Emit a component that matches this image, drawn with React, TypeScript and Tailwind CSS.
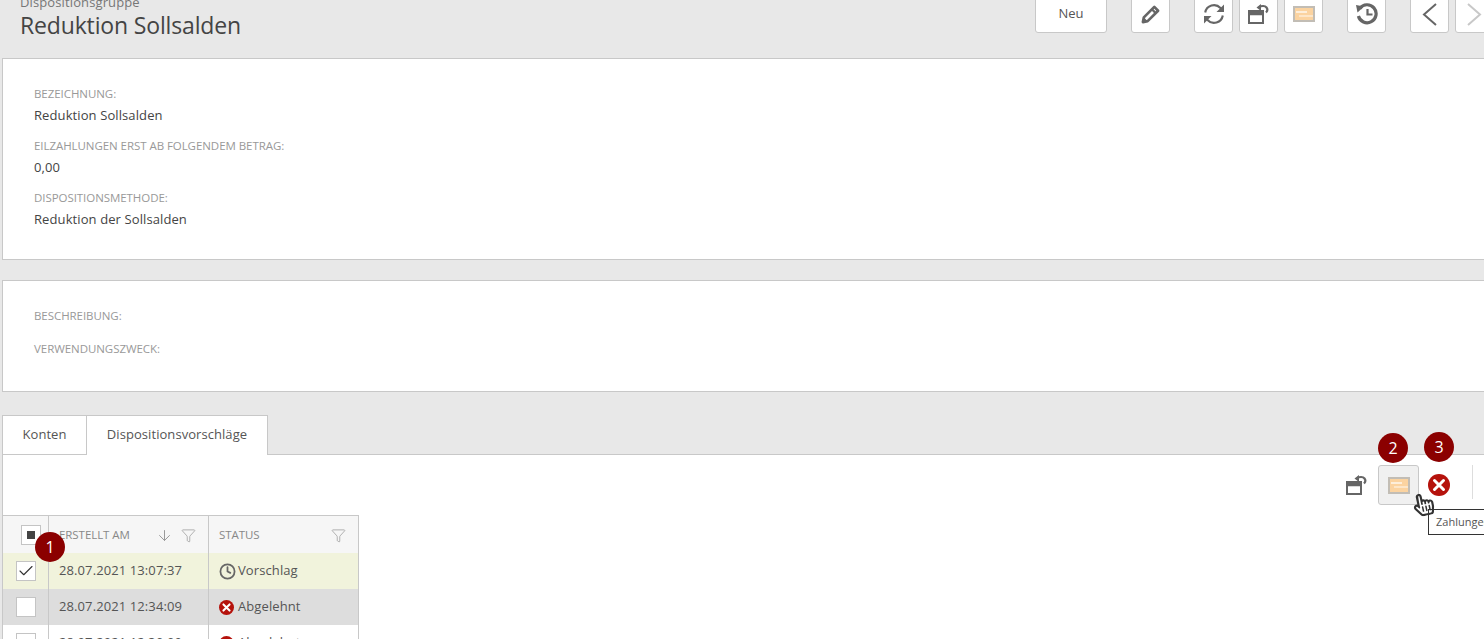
import React from 'react';
import { ArrowDown, Check, Clock, Filter } from 'lucide-react';
import { FaRegHandPointer } from 'react-icons/fa';

const font = "font-['Open_Sans','Liberation_Sans',sans-serif]";

const ToolButton: React.FC<{ className?: string; children: React.ReactNode }> = ({ className = '', children }) => (
  <div className={`h-[44px] bg-white border border-[#c8c8c8] rounded-b-[3px] flex items-center justify-center pt-[6px] shrink-0 ${className}`}>
    {children}
  </div>
);

const PencilIcon = () => (
  <svg width="19" height="19" viewBox="0 0 20 20" fill="none">
    <path d="M14 2 18 6 7 17 2 18 3 13Z" stroke="#666" strokeWidth="2.8" strokeLinejoin="round" />
    <path d="M11.5 4.5 15.5 8.5" stroke="#666" strokeWidth="2.4" />
    <path d="M2 18 3 13 7 17Z" fill="#666" />
  </svg>
);

const RefreshIcon = () => (
  <svg width="22" height="22" viewBox="0 0 22 22" fill="none">
    <path d="M2.2 9.5A8.9 8.9 0 0 1 17.5 5L19.5 7" stroke="#666" strokeWidth="2.1" />
    <path d="M21 1.5V9H13.5Z" fill="#666" />
    <path d="M19.8 12.5A8.9 8.9 0 0 1 4.5 17L2.5 15" stroke="#666" strokeWidth="2.1" />
    <path d="M1 20.5V13H8.5Z" fill="#666" />
  </svg>
);

const UnlockWindowIcon = () => (
  <svg width="21" height="20" viewBox="0 0 21 20" fill="none">
    <path d="M1 7H15V19H1Z" stroke="#666" strokeWidth="2" />
    <path d="M1 7H15V10.5H1Z" fill="#666" stroke="#666" strokeWidth="1.5" />
    <path d="M11 3.2C13.5 1.6 17 1.5 18.5 3.5C19.8 5.2 19.3 7.2 18 8.5" stroke="#666" strokeWidth="2.2" />
    <path d="M8.5 3.5 13 0V7Z" fill="#666" />
  </svg>
);

const HistoryIcon = () => (
  <svg width="23" height="22" viewBox="0 0 23 22" fill="none">
    <path d="M4.8 5.5A9 9 0 1 1 3.4 13" stroke="#666" strokeWidth="3.2" />
    <path d="M1 2 9 3.5 2.5 9.5Z" fill="#666" />
    <path d="M12.5 6V11.5H17.5" stroke="#666" strokeWidth="2.2" />
  </svg>
);

const PaymentIcon: React.FC<{ h?: string }> = ({ h = 'h-[17px]' }) => (
  <div className={`w-[22px] ${h} border-2 border-[#c2bdb5] bg-[#fbd3a0] flex flex-col justify-center gap-[2px] overflow-hidden`}>
    <div className="h-[2px] w-[11px] ml-[1px] bg-[#fdeeda]" />
    <div className="h-[2px] w-[14px] ml-[4px] bg-[#fde6c8]" />
  </div>
);

const ChevronIcon: React.FC<{ left?: boolean; color: string }> = ({ left, color }) => (
  <svg width="15" height="23" viewBox="0 0 15 23" fill="none">
    <path d={left ? 'M14 1 2 11.5 14 22' : 'M1 1 13 11.5 1 22'} stroke={color} strokeWidth="2" />
  </svg>
);

const RedX: React.FC<{ size: number }> = ({ size }) => (
  <svg width={size} height={size} viewBox="0 0 22 22" className="shrink-0">
    <circle cx="11" cy="11" r="11" fill="#b5120c" />
    <path d="M6.5 6.5 15.5 15.5M15.5 6.5 6.5 15.5" stroke="#fff" strokeWidth="3" strokeLinecap="round" />
  </svg>
);

const labelCls = 'text-[11.5px] leading-[16px] text-[#999] uppercase tracking-[-0.06px]';

const Field: React.FC<{ label: string; value?: string }> = ({ label, value }) => (
  <div className="h-[52px]">
    <div className={labelCls}>{label}</div>
    {value && <div className="text-[13px] leading-[20px] mt-[3px] text-[#444] tracking-[0.1px]">{value}</div>}
  </div>
);

const Badge: React.FC<{ n: number; className: string }> = ({ n, className }) => (
  <div className={`absolute w-[30px] h-[30px] rounded-full bg-[#8b0000] text-white text-[16px] flex items-center justify-center ${className}`}>
    {n}
  </div>
);

const Box: React.FC<{ children?: React.ReactNode }> = ({ children }) => (
  <div className="w-[20px] h-[20px] border border-[#c4c4c4] bg-white flex items-center justify-center">{children}</div>
);

const rows = [
  { date: '28.07.2021 13:07:37', status: 'Vorschlag', bg: 'bg-[#f1f3dc]', checked: true },
  { date: '28.07.2021 12:34:09', status: 'Abgelehnt', bg: 'bg-[#dddddd]', checked: false },
  { date: '28.07.2021 12:30:00', status: 'Abgelehnt', bg: 'bg-white', checked: false },
];

export default function App() {
  return (
    <div className={`relative w-[1484px] h-[639px] overflow-hidden bg-[#e8e8e8] ${font}`}>
      {/* Header */}
      <div className="h-[58px] flex justify-between">
        <div className="pl-[20px] -mt-[7px]">
          <div className="text-[13px] leading-[18px] text-[#777] tracking-[0.12px]">Dispositionsgruppe</div>
          <div className="text-[23px] leading-[29px] text-[#444] tracking-[-0.15px]">Reduktion Sollsalden</div>
        </div>
        <div className="flex -mt-[11px] -mr-[10px]">
          <ToolButton className="w-[72px] text-[13px] text-[#555]">Neu</ToolButton>
          <ToolButton className="w-[39px] ml-[24px]"><PencilIcon /></ToolButton>
          <ToolButton className="w-[39px] ml-[24px]"><RefreshIcon /></ToolButton>
          <ToolButton className="w-[39px] ml-[6px]"><UnlockWindowIcon /></ToolButton>
          <ToolButton className="w-[39px] ml-[6px]"><PaymentIcon h="h-[16px]" /></ToolButton>
          <ToolButton className="w-[39px] ml-[24px]"><HistoryIcon /></ToolButton>
          <ToolButton className="w-[39px] ml-[24px]"><ChevronIcon left color="#666" /></ToolButton>
          <ToolButton className="w-[39px] ml-[6px]"><ChevronIcon color="#c8c8c8" /></ToolButton>
        </div>
      </div>

      {/* Details */}
      <div className="ml-[2px] -mr-[4px] h-[202px] bg-white border border-[#c8c8c8] pl-[31px] pt-[27px]">
        <Field label="Bezeichnung:" value="Reduktion Sollsalden" />
        <Field label="Eilzahlungen erst ab folgendem Betrag:" value="0,00" />
        <Field label="Dispositionsmethode:" value="Reduktion der Sollsalden" />
      </div>

      <div className="ml-[2px] -mr-[4px] mt-[20px] h-[112px] bg-white border border-[#c8c8c8] pl-[31px] pt-[27px]">
        <div className={`h-[33px] ${labelCls}`}>Beschreibung:</div>
        <div className={labelCls}>Verwendungszweck:</div>
      </div>

      {/* Tabs */}
      <div className="ml-[2px] mt-[23px] h-[40px] flex text-[13px] text-[#555] tracking-[0.06px]">
        <div className="w-[85px] h-[40px] bg-white border border-[#c8c8c8] flex items-center justify-center pb-px">Konten</div>
        <div className="relative z-10 w-[182px] h-[40px] -ml-[1px] bg-white border border-b-0 border-[#c8c8c8] flex items-center justify-center pb-px">Dispositionsvorschläge</div>
      </div>

      {/* Tab content */}
      <div className="ml-[2px] -mr-[4px] h-[200px] bg-white border border-[#c8c8c8] -mt-[1px]">
        <div className="h-[60px] flex items-start justify-end pt-[10px] pr-[14px]">
          <div className="h-[40px] w-[21px] flex items-center justify-center mr-[11px]"><UnlockWindowIcon /></div>
          <div className="h-[40px] w-[41px] bg-[#f0f0f0] border border-[#c8c8c8] rounded-[3px] flex items-center justify-center"><PaymentIcon /></div>
          <div className="h-[40px] w-[40px] flex items-center justify-center"><RedX size={22} /></div>
          <div className="ml-[13px] h-[34px] w-px bg-[#ddd]" />
        </div>
        <div className="w-[356px] border-t border-r border-[#c8c8c8]">
          <div className="h-[37px] flex bg-[#f6f6f6] text-[11.5px] text-[#888] uppercase tracking-[-0.06px]">
            <div className="w-[46px] border-r border-[#c8c8c8] flex items-center justify-center pl-[11px] pr-[1px]">
              <div className="w-[20px] h-[20px] border border-[#c4c4c4] bg-white flex items-center justify-center">
                <div className="w-[8px] h-[8px] bg-[#444]" />
              </div>
            </div>
            <div className="w-[160px] border-r border-[#c8c8c8] flex items-center pl-[10px] pr-[12px] pt-px">
              <span className="flex-1">Erstellt am</span>
              <ArrowDown size={17} strokeWidth={1.4} className="text-[#999] mr-[8px]" />
              <Filter size={15} strokeWidth={1.2} className="text-[#999]" />
            </div>
            <div className="flex-1 flex items-center pl-[10px] pr-[12px] pt-px">
              <span className="flex-1">Status</span>
              <Filter size={15} strokeWidth={1.2} className="text-[#999]" />
            </div>
          </div>
          {rows.map((r, i) => (
            <div key={i} className={`h-[36px] flex items-center text-[13px] text-[#555] tracking-[0.1px] ${r.bg}`}>
              <div className="w-[46px] h-full border-r border-[#c8c8c8] flex items-center justify-center px-[1px]">
                <Box>{r.checked && <Check size={20} strokeWidth={1.5} className="text-[#333]" />}</Box>
              </div>
              <div className="w-[160px] h-full border-r border-[#c8c8c8] flex items-center pl-[10px]">{r.date}</div>
              <div className="flex-1 flex items-center pl-[10px] gap-[2px]">
                {r.status === 'Vorschlag'
                  ? <Clock size={17} strokeWidth={2.5} className="text-[#666]" />
                  : <RedX size={15} />}
                <span className={r.status === 'Vorschlag' ? '' : 'ml-[2px]'}>{r.status}</span>
              </div>
            </div>
          ))}
        </div>
      </div>

      {/* Annotations */}
      <Badge n={1} className="left-[35px] top-[532px]" />
      <Badge n={2} className="left-[1378px] top-[433px]" />
      <Badge n={3} className="left-[1424px] top-[432px]" />
      <div className="absolute left-[1428px] top-[509px] h-[26px] w-[70px] bg-white border border-[#333] pl-[7px] text-[11px] leading-[24px] text-[#555] whitespace-nowrap overflow-hidden">Zahlungen</div>
      <FaRegHandPointer className="absolute left-[1412px] top-[493px] text-[#333] text-[23px] -rotate-12" />
    </div>
  );
}
